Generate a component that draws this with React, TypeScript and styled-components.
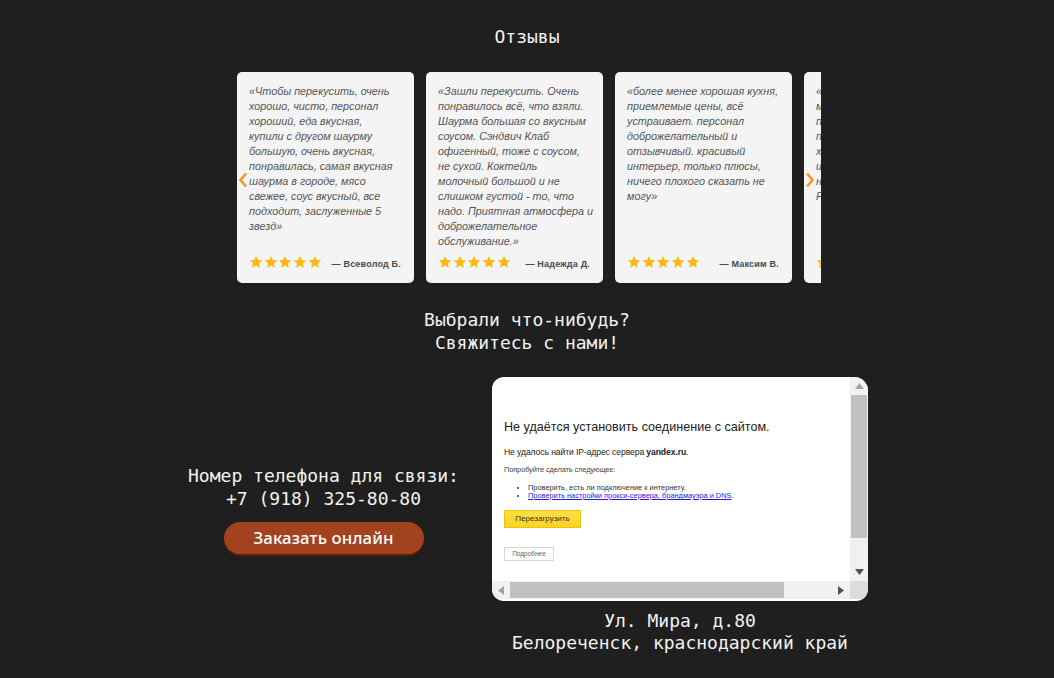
import React from 'react';
import styled, { createGlobalStyle } from 'styled-components';

const GlobalStyle = createGlobalStyle`
    body {
        margin: 0;
        background: #1f1f1f;
        font-family: 'DejaVu Sans Mono', monospace;
    }
`;

const Page = styled.div`
    display: flex;
    flex-direction: column;
    align-items: center;
    padding-top: 25px;
    color: #f2f2f2;
`;

const Heading = styled.h2`
    margin: 0;
    font-size: 18px;
    font-weight: normal;
    line-height: 23px;
    text-align: center;
    white-space: pre-line;
`;

const Carousel = styled.div`
    position: relative;
    align-self: flex-start;
    margin: 24px 0 25px calc(50% - 290px);
    width: 584px;
    overflow: hidden;
`;

const Track = styled.div`
    display: flex;
    gap: 12px;
`;

const Card = styled.div`
    flex: 0 0 177px;
    width: 177px;
    min-width: 0;
    height: 211px;
    box-sizing: border-box;
    padding: 12px 13px 14px 12px;
    background: #f4f4f4;
    border-radius: 5px;
    overflow: hidden;
    display: flex;
    flex-direction: column;
`;

const Quote = styled.p`
    margin: 0;
    font-family: 'Liberation Sans', Arial, sans-serif;
    font-style: italic;
    font-size: 10.8px;
    line-height: 15px;
    color: #555;
    white-space: nowrap;
    span {
        display: block;
    }
`;

const CardFoot = styled.div`
    margin-top: auto;
    display: flex;
    align-items: center;
    justify-content: space-between;
`;

const Stars = styled.div`
    display: flex;
    gap: 0.7px;
    svg {
        width: 14px;
        height: 14px;
    }
`;

const Author = styled.span`
    font-family: 'Liberation Sans', Arial, sans-serif;
    font-weight: bold;
    font-size: 9px;
    color: #4a4a4a;
    margin-top: 5px;
    letter-spacing: 0.2px;
    white-space: nowrap;
`;

const Arrow = styled.div<{ $side: 'left' | 'right' }>`
    position: absolute;
    top: 100px;
    ${(p) => (p.$side === 'left' ? 'left: 1px;' : 'right: 6px;')}
    width: 10px;
    height: 16px;
    svg {
        display: block;
    }
`;

const ContactRow = styled.div`
    margin-top: 23px;
    display: flex;
    align-items: center;
    gap: 31px;
`;

const PhoneCol = styled.div`
    width: 275px;
    display: flex;
    flex-direction: column;
    align-items: center;
    margin-bottom: 14px;
`;

const OrderButton = styled.button`
    margin-top: 12px;
    width: 200px;
    height: 32px;
    border: none;
    border-radius: 16px;
    background: #a3421f;
    box-shadow: 0 2px 0 #5c200d;
    color: #fff;
    font-family: 'Noto Sans', sans-serif;
    font-size: 16.8px;
    font-weight: 500;
    letter-spacing: 0.1px;
    cursor: pointer;
`;

const MapCol = styled.div`
    display: flex;
    flex-direction: column;
    align-items: center;
`;

const MapFrame = styled.div`
    width: 376px;
    height: 224px;
    border-radius: 12px 14px 12px 12px;
    overflow: hidden;
    background: #fff;
    display: grid;
    grid-template-columns: 1fr 18px;
    grid-template-rows: 1fr 18px 2px;
`;

const ErrorPage = styled.div`
    padding: 42px 12px 0;
    font-family: 'Liberation Sans', Arial, sans-serif;
    color: #222;
    overflow: hidden;
    white-space: nowrap;
`;

const ErrorTitle = styled.div`
    font-size: 12.6px;
    line-height: 16px;
`;

const ErrorLine = styled.div<{ $size: number; $top: number; $color?: string }>`
    font-size: ${(p) => p.$size}px;
    margin-top: ${(p) => p.$top}px;
    color: ${(p) => p.$color || '#222'};
    letter-spacing: -0.1px;
`;

const Tips = styled.ul`
    margin: 10px 0 0;
    padding-left: 24px;
    font-size: 7.4px;
    line-height: 8px;
    color: #333;
    li::marker {
        font-size: 7px;
    }
    a {
        color: #2a1bdc;
        text-decoration: underline;
    }
`;

const ReloadButton = styled.div`
    margin-top: 10px;
    width: 77px;
    height: 18px;
    box-sizing: border-box;
    background: linear-gradient(#ffdf45, #fdd31d);
    border: 1px solid #e8c41a;
    font-size: 8px;
    line-height: 16px;
    text-align: center;
    color: #333;
`;

const MoreButton = styled.div`
    margin-top: 19px;
    width: 50px;
    height: 14px;
    box-sizing: border-box;
    border: 1px solid #d8d8d8;
    font-size: 6.5px;
    line-height: 12px;
    text-align: center;
    color: #666;
`;

const VScroll = styled.div`
    background: #f1f1f1;
    display: flex;
    flex-direction: column;
    align-items: stretch;
    padding: 0 1px;
`;

const HScroll = styled.div`
    background: #f1f1f1;
    display: flex;
    align-items: center;
    padding: 1px 0;
`;

const Corner = styled.div`
    background: #dcdcdc;
`;

const ScrollArrow = styled.div`
    flex: 0 0 auto;
    display: flex;
    align-items: center;
    justify-content: center;
    width: 18px;
    height: 18px;
    align-self: center;
`;

const Spacer = styled.div`
    flex: 1;
`;

const Thumb = styled.div`
    background: #c1c1c1;
`;

const Address = styled(Heading)`
    margin-top: 9px;
    line-height: 22px;
`;

const Star = () => (
    <svg viewBox="0 0 24 24">
        <path
            fill="#fbb80f"
            d="M12 1.5l3.1 7.1 7.6.7-5.8 5.1 1.8 7.6L12 18l-6.7 4 1.8-7.6L1.3 9.3l7.6-.7z"
        />
    </svg>
);

const reviews = [
    {
        lines: [
            '«Чтобы перекусить, очень',
            'хорошо, чисто, персонал',
            'хороший, еда вкусная,',
            'купили с другом шаурму',
            'большую, очень вкусная,',
            'понравилась, самая вкусная',
            'шаурма в городе, мясо',
            'свежее, соус вкусный, все',
            'подходит, заслуженные 5',
            'звезд»',
        ],
        author: '— Всеволод Б.',
    },
    {
        lines: [
            '«Зашли перекусить. Очень',
            'понравилось всё, что взяли.',
            'Шаурма большая со вкусным',
            'соусом. Сэндвич Клаб',
            'офигенный, тоже с соусом,',
            'не сухой. Коктейль',
            'молочный большой и не',
            'слишком густой - то, что',
            'надо. Приятная атмосфера и',
            'доброжелательное',
            'обслуживание.»',
        ],
        author: '— Надежда Д.',
    },
    {
        lines: [
            '«более менее хорошая кухня,',
            'приемлемые цены, всё',
            'устраивает. персонал',
            'доброжелательный и',
            'отзывчивый. красивый',
            'интерьер, только плюсы,',
            'ничего плохого сказать не',
            'могу»',
        ],
        author: '— Максим В.',
    },
    {
        lines: [
            '«Отличное место,',
            'мясо сочное, лаваш',
            'поджаристый, соус',
            'просто огонь. Лучшая',
            'хрустящая картошка и',
            'шаурма в Белореченске,',
            'настоятельно',
            'Рекомендую!»',
        ],
        author: '— Ольга К.',
    },
];

const App: React.FC = () => {
    return (
        <Page>
            <GlobalStyle />
            <Heading>Отзывы</Heading>

            {/* карусель отзывов */}
            <Carousel>
                <Track>
                    {reviews.map((r) => (
                        <Card key={r.author}>
                            <Quote>
                                {r.lines.map((l) => (
                                    <span key={l}>{l}</span>
                                ))}
                            </Quote>
                            <CardFoot>
                                <Stars>
                                    {[0, 1, 2, 3, 4].map((i) => (
                                        <Star key={i} />
                                    ))}
                                </Stars>
                                <Author>{r.author}</Author>
                            </CardFoot>
                        </Card>
                    ))}
                </Track>
                <Arrow $side="left">
                    <svg width="10" height="16" viewBox="0 0 10 16">
                        <path d="M8 1.5L2.5 8 8 14.5" fill="none" stroke="#f39a26" strokeWidth="2.6" />
                    </svg>
                </Arrow>
                <Arrow $side="right">
                    <svg width="10" height="16" viewBox="0 0 10 16">
                        <path d="M2 1.5L7.5 8 2 14.5" fill="none" stroke="#f39a26" strokeWidth="2.6" />
                    </svg>
                </Arrow>
            </Carousel>

            <Heading>{'Выбрали что-нибудь?\nСвяжитесь с нами!'}</Heading>

            <ContactRow>
                <PhoneCol>
                    <Heading>{'Номер телефона для связи:\n+7 (918) 325-80-80'}</Heading>
                    <OrderButton>Заказать онлайн</OrderButton>
                </PhoneCol>

                <MapCol>
                    {/* карта (не загрузилась) */}
                    <MapFrame>
                        <ErrorPage>
                            <ErrorTitle>Не удаётся установить соединение с сайтом.</ErrorTitle>
                            <ErrorLine $size={8.6} $top={12}>
                                Не удалось найти IP-адрес сервера <b>yandex.ru</b>.
                            </ErrorLine>
                            <ErrorLine $size={7.4} $top={8} $color="#444">
                                Попробуйте сделать следующее:
                            </ErrorLine>
                            <Tips>
                                <li>Проверить, есть ли подключение к интернету.</li>
                                <li>
                                    <a>Проверить настройки прокси-сервера, брандмауэра и DNS</a>.
                                </li>
                            </Tips>
                            <ReloadButton>Перезагрузить</ReloadButton>
                            <MoreButton>Подробнее</MoreButton>
                        </ErrorPage>
                        <VScroll>
                            <ScrollArrow>
                                <svg width="9" height="6" viewBox="0 0 9 6">
                                    <path d="M0 6L4.5 0 9 6z" fill="#a3a3a3" />
                                </svg>
                            </ScrollArrow>
                            <Thumb style={{ height: 143 }} />
                            <Spacer />
                            <ScrollArrow>
                                <svg width="9" height="6" viewBox="0 0 9 6">
                                    <path d="M0 0L4.5 6 9 0z" fill="#505050" />
                                </svg>
                            </ScrollArrow>
                        </VScroll>
                        <HScroll>
                            <ScrollArrow>
                                <svg width="6" height="9" viewBox="0 0 6 9">
                                    <path d="M6 0L0 4.5 6 9z" fill="#a3a3a3" />
                                </svg>
                            </ScrollArrow>
                            <Thumb style={{ width: 274, height: 16 }} />
                            <Spacer />
                            <ScrollArrow>
                                <svg width="6" height="9" viewBox="0 0 6 9">
                                    <path d="M0 0L6 4.5 0 9z" fill="#505050" />
                                </svg>
                            </ScrollArrow>
                        </HScroll>
                        <Corner />
                    </MapFrame>
                    <Address>{'Ул. Мира, д.80\nБелореченск, краснодарский край'}</Address>
                </MapCol>
            </ContactRow>
        </Page>
    );
};

export default App;
